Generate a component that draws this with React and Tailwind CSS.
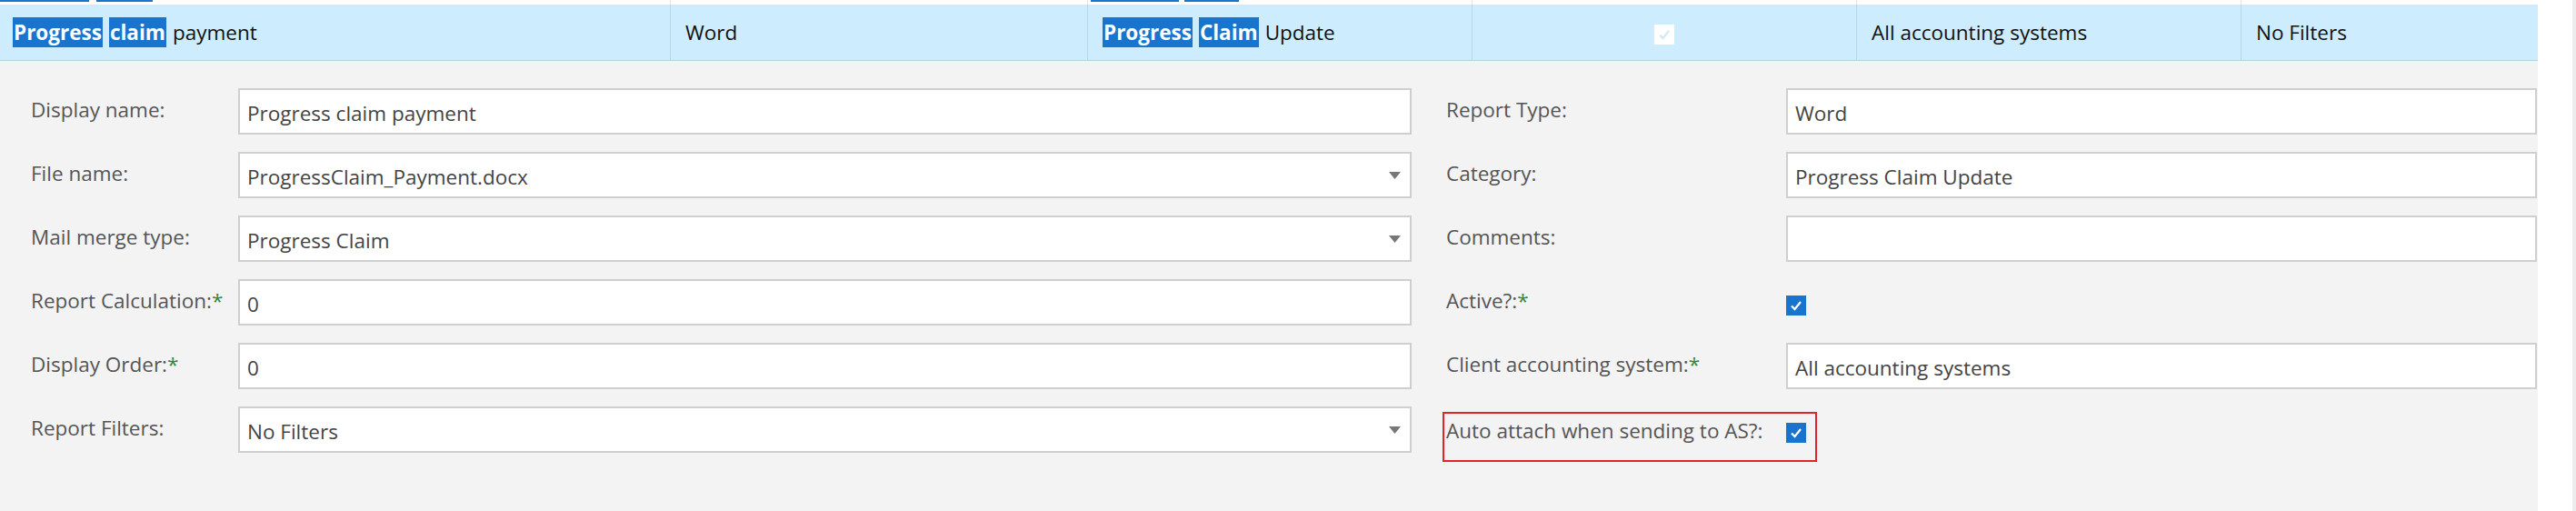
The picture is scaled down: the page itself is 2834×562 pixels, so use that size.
import React from "react";

const font = { fontFamily: '"Open Sans", "Noto Sans", sans-serif' };

const gridCols = ["w-[738px]", "w-[459px]", "w-[423px]", "w-[423px]", "w-[423px]", "w-[326px]"];

function Hl({ children }) {
  return (
    <span className="bg-[#1874cd] text-white font-bold px-[1px] mr-[7px]">{children}</span>
  );
}

function Arrow() {
  return (
    <svg width="13" height="8" viewBox="0 0 13 8" className="absolute right-[10px] top-1/2 -translate-y-1/2">
      <path d="M0 0 H13 L6.5 8 Z" fill="#777" />
    </svg>
  );
}

function Check({ light }) {
  return (
    <div
      className={`w-[22px] h-[22px] flex items-center justify-center ${
        light ? "bg-white" : "bg-[#1874cd]"
      }`}
    >
      <svg width="14" height="12" viewBox="0 0 14 12">
        <path
          d="M2 6.5 L5.5 10 L12 2"
          fill="none"
          stroke={light ? "#cfe9f8" : "#ffffff"}
          strokeWidth="2.2"
        />
      </svg>
    </div>
  );
}

function Field({ value, dropdown, width }) {
  return (
    <div
      className={`relative h-[51px] ${width} bg-white border-2 border-[#cfcfcf] flex items-center pl-[8px] text-[#444] text-[22.5px] pt-[4px]`}
    >
      {value}
      {dropdown && <Arrow />}
    </div>
  );
}

function Label({ text, req, width }) {
  return (
    <div className={`${width} shrink-0 whitespace-nowrap text-[#555] text-[22.5px] pb-[4px]`}>
      {text}
      {req && <span className="text-[#2f8a3a]">*</span>}
    </div>
  );
}

export default function App() {
  const left = [
    { label: "Display name:", value: "Progress claim payment" },
    { label: "File name:", value: "ProgressClaim_Payment.docx", dropdown: true },
    { label: "Mail merge type:", value: "Progress Claim", dropdown: true },
    { label: "Report Calculation:", req: true, value: "0" },
    { label: "Display Order:", req: true, value: "0" },
    { label: "Report Filters:", value: "No Filters", dropdown: true },
  ];

  return (
    <div className="w-[2834px] h-[562px] bg-white flex overflow-hidden" style={font}>
      <div className="w-[2792px] flex flex-col">
        {/* tail of the previous grid row */}
        <div className="h-[5px] relative bg-white">
          <div className="absolute top-0 left-0 w-[98px] h-[2px] bg-[#1874cd]" />
          <div className="absolute top-0 left-[106px] w-[62px] h-[2px] bg-[#1874cd]" />
          <div className="absolute top-0 left-[1200px] w-[97px] h-[2px] bg-[#1874cd]" />
          <div className="absolute top-0 left-[1303px] w-[60px] h-[2px] bg-[#1874cd]" />
          <div className="absolute top-0 left-[737px] w-px h-full bg-[#e2e2e2]" />
          <div className="absolute top-0 left-[1196px] w-px h-full bg-[#e2e2e2]" />
          <div className="absolute top-0 left-[1619px] w-px h-full bg-[#e2e2e2]" />
          <div className="absolute top-0 left-[2042px] w-px h-full bg-[#e2e2e2]" />
          <div className="absolute top-0 left-[2465px] w-px h-full bg-[#e2e2e2]" />
        </div>

        {/* selected grid row */}
        <div className="h-[62px] flex bg-[#cdecfd] border-b border-[#b3d3e3] text-[22.5px] text-[#111]">
          <div className={`${gridCols[0]} border-r border-[#b7d8ea] flex items-center pl-[14px]`}>
            <Hl>Progress</Hl>
            <Hl>claim</Hl>
            <span>payment</span>
          </div>
          <div className={`${gridCols[1]} border-r border-[#b7d8ea] flex items-center pl-[16px]`}>Word</div>
          <div className={`${gridCols[2]} border-r border-[#b7d8ea] flex items-center pl-[16px]`}>
            <Hl>Progress</Hl>
            <Hl>Claim</Hl>
            <span>Update</span>
          </div>
          <div className={`${gridCols[3]} border-r border-[#b7d8ea] flex items-center justify-center pt-[5px]`}>
            <Check light />
          </div>
          <div className={`${gridCols[4]} border-r border-[#b7d8ea] flex items-center pl-[16px]`}>
            All accounting systems
          </div>
          <div className={`${gridCols[5]} flex items-center pl-[16px]`}>No Filters</div>
        </div>

        {/* edit form */}
        <div className="flex-1 bg-[#f3f3f3] pt-[30px] flex">
          <div className="w-[1553px] pl-[34px] flex flex-col gap-[19px]">
            {left.map((r) => (
              <div key={r.label} className="h-[51px] flex items-center">
                <Label text={r.label} req={r.req} width="w-[228px]" />
                <Field value={r.value} dropdown={r.dropdown} width="w-[1291px]" />
              </div>
            ))}
          </div>

          <div className="ml-[38px] flex flex-col gap-[19px]">
            <div className="h-[51px] flex items-center">
              <Label text="Report Type:" width="w-[374px]" />
              <Field value="Word" width="w-[826px]" />
            </div>
            <div className="h-[51px] flex items-center">
              <Label text="Category:" width="w-[374px]" />
              <Field value="Progress Claim Update" width="w-[826px]" />
            </div>
            <div className="h-[51px] flex items-center">
              <Label text="Comments:" width="w-[374px]" />
              <Field value="" width="w-[826px]" />
            </div>
            <div className="h-[51px] flex items-center">
              <Label text="Active?:" req width="w-[374px]" />
              <div className="pt-[6px]">
                <Check />
              </div>
            </div>
            <div className="h-[51px] flex items-center">
              <Label text="Client accounting system:" req width="w-[374px]" />
              <Field value="All accounting systems" width="w-[826px]" />
            </div>
            <div className="h-[51px] flex items-center relative">
              <div className="pt-[6px]">
                <Label text="Auto attach when sending to AS?:" width="w-[374px]" />
              </div>
              <div className="pt-[6px]">
                <Check />
              </div>
              <div className="absolute left-[-4px] top-[6px] w-[412px] h-[55px] border-2 border-[#e3232b]" />
            </div>
          </div>
        </div>
      </div>
      <div className="w-[38px] bg-white" />
      <div className="w-[4px] bg-[#ececec]" />
    </div>
  );
}
